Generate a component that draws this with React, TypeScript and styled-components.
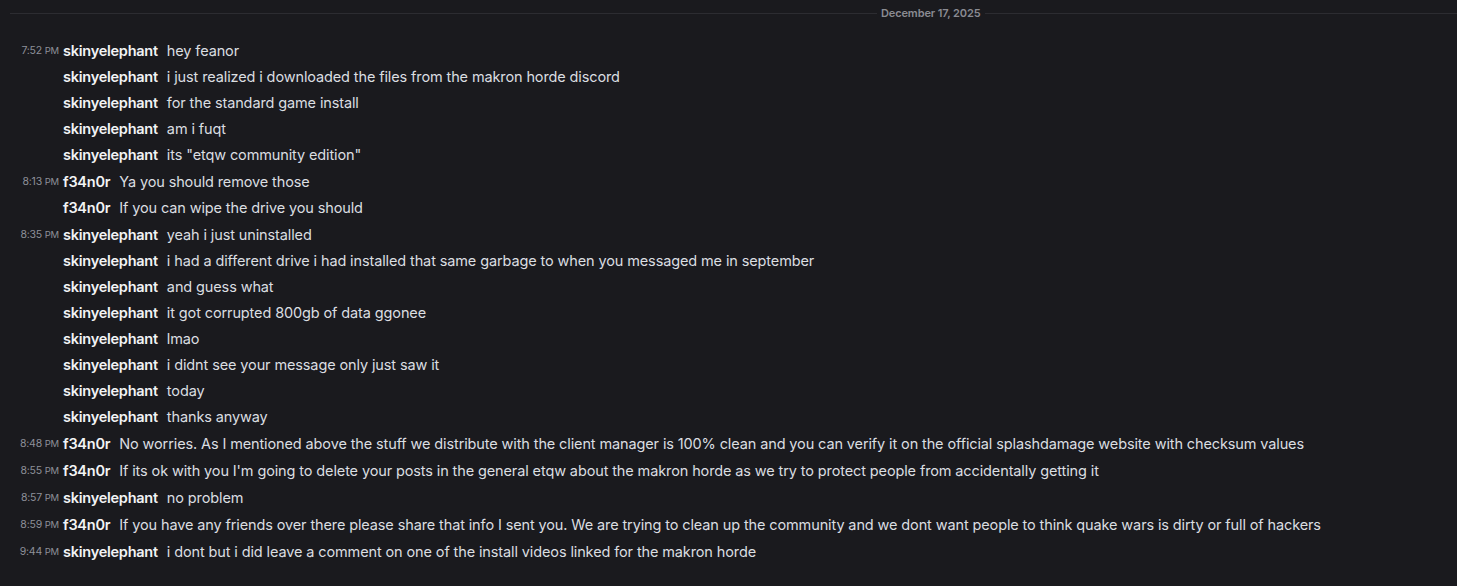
import styled, { createGlobalStyle } from 'styled-components';

const GlobalStyle = createGlobalStyle`
  html, body {
    margin: 0;
    padding: 0;
    background: #1a1a1e;
  }
  body {
    font-family: Inter, "Noto Sans", sans-serif;
    -webkit-font-smoothing: antialiased;
  }
`;

const Page = styled.div`
  width: 1457px;
  height: 586px;
  background: #1a1a1e;
  overflow: hidden;
`;

const Divider = styled.div`
  display: flex;
  align-items: center;
  padding-left: 10px;
  height: 26px;
`;

const Line = styled.div<{ grow: number }>`
  flex: ${p => p.grow};
  height: 1px;
  background: #2c2c31;
`;

const DateLabel = styled.span`
  padding: 0 4px;
  font-size: 11px;
  font-weight: 600;
  color: #8a8b92;
  white-space: nowrap;
  letter-spacing: -0.1px;
`;

const List = styled.div`
  display: flex;
  flex-direction: column;
  padding-top: 11px;
`;

const Row = styled.div<{ first: boolean }>`
  display: flex;
  align-items: center;
  height: 26px;
  margin-top: ${p => (p.first ? '1px' : '0')};
  white-space: nowrap;
`;

const Time = styled.span`
  width: 59px;
  flex: none;
  text-align: right;
  font-size: 10.5px;
  color: #8e9099;
  letter-spacing: -0.2px;
  small {
    font-size: 9.5px;
  }
`;

const Author = styled.span`
  margin-left: 4px;
  font-size: 14.5px;
  font-weight: 600;
  color: #f2f3f5;
  letter-spacing: -0.25px;
`;

const Text = styled.span`
  margin-left: 9px;
  font-size: 14.5px;
  color: #dbdee1;
  letter-spacing: -0.12px;
`;

type Msg = { time?: string; author: string; text: string };

const messages: Msg[] = [
  { time: '7:52', author: 'skinyelephant', text: 'hey feanor' },
  { author: 'skinyelephant', text: 'i just realized i downloaded the files from the makron horde discord' },
  { author: 'skinyelephant', text: 'for the standard game install' },
  { author: 'skinyelephant', text: 'am i fuqt' },
  { author: 'skinyelephant', text: 'its "etqw community edition"' },
  { time: '8:13', author: 'f34n0r', text: 'Ya you should remove those' },
  { author: 'f34n0r', text: 'If you can wipe the drive you should' },
  { time: '8:35', author: 'skinyelephant', text: 'yeah i just uninstalled' },
  { author: 'skinyelephant', text: 'i had a different drive i had installed that same garbage to when you messaged me in september' },
  { author: 'skinyelephant', text: 'and guess what' },
  { author: 'skinyelephant', text: 'it got corrupted 800gb of data ggonee' },
  { author: 'skinyelephant', text: 'lmao' },
  { author: 'skinyelephant', text: 'i didnt see your message only just saw it' },
  { author: 'skinyelephant', text: 'today' },
  { author: 'skinyelephant', text: 'thanks anyway' },
  { time: '8:48', author: 'f34n0r', text: 'No worries. As I mentioned above the stuff we distribute with the client manager is 100% clean and you can verify it on the official splashdamage website with checksum values' },
  { time: '8:55', author: 'f34n0r', text: "If its ok with you I'm going to delete your posts in the general etqw about the makron horde as we try to protect people from accidentally getting it" },
  { time: '8:57', author: 'skinyelephant', text: 'no problem' },
  { time: '8:59', author: 'f34n0r', text: 'If you have any friends over there please share that info I sent you. We are trying to clean up the community and we dont want people to think quake wars is dirty or full of hackers' },
  { time: '9:44', author: 'skinyelephant', text: 'i dont but i did leave a comment on one of the install videos linked for the makron horde' },
];

export default function App() {
  return (
    <Page>
      <GlobalStyle />
      <Divider>
        <Line grow={866} />
        <DateLabel>December 17, 2025</DateLabel>
        <Line grow={472} />
      </Divider>
      <List>
        {messages.map((m, i) => (
          <Row key={i} first={!!m.time && i > 0}>
            <Time>
              {m.time && (
                <>
                  {m.time} <small>PM</small>
                </>
              )}
            </Time>
            <Author>{m.author}</Author>
            <Text>{m.text}</Text>
          </Row>
        ))}
      </List>
    </Page>
  );
}
